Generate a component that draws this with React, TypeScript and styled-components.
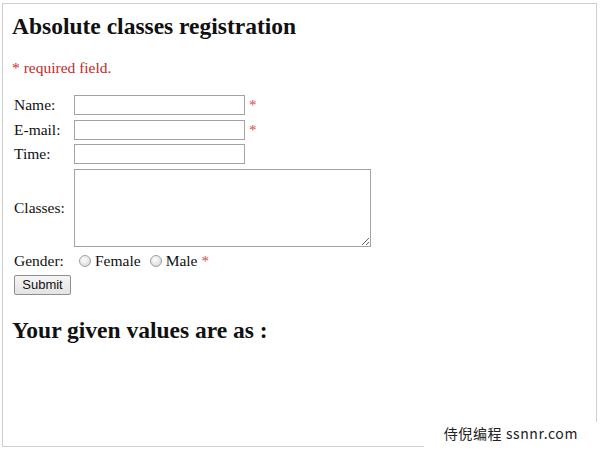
import React, { FC } from 'react';
import styled, { createGlobalStyle } from 'styled-components';

const GlobalStyle = createGlobalStyle`
    html, body {
        margin: 0;
        padding: 0;
        background: #ffffff;
    }
    body {
        width: 600px;
        height: 450px;
        overflow: hidden;
        font-family: 'Liberation Serif', 'Times New Roman', serif;
        color: #111111;
    }
`;

const Frame = styled.div`
    position: relative;
    box-sizing: border-box;
    margin: 3px 0 0 2px;
    width: 595px;
    height: 444px;
    border: 1px solid #cfcfcf;
    padding: 9px 9px 0 9px;
`;

const Title = styled.h2`
    margin: 0;
    font-size: 23.5px;
    line-height: 26px;
    font-weight: bold;
`;

const Required = styled.p`
    margin: 20px 0 0 0;
    font-size: 15.5px;
    line-height: 18px;
    color: #c62828;
`;

const FormGrid = styled.form`
    display: grid;
    grid-template-columns: 60px auto;
    row-gap: 4.5px;
    margin: 18px 0 0 2px;
    align-items: center;
    justify-items: start;
`;

const Label = styled.label`
    font-size: 15.5px;
    line-height: 18px;
`;

const Field = styled.div`
    display: flex;
    align-items: center;
    gap: 4px;
`;

const TextInput = styled.input`
    box-sizing: border-box;
    width: 171px;
    height: 20px;
    margin: 0;
    border: 1px solid #a3a3a3;
    background: #ffffff;
    outline: none;
`;

const TextArea = styled.textarea`
    box-sizing: border-box;
    display: block;
    width: 297px;
    height: 78px;
    margin: 0;
    border: 1px solid #a3a3a3;
    outline: none;
`;

const Star = styled.span`
    color: #d84a4a;
    font-size: 15px;
    line-height: 18px;
`;

const RadioGroup = styled.div`
    display: flex;
    align-items: center;
    font-size: 15.5px;
    line-height: 18px;
    padding: 1px 0 0 5px;
`;

const Radio = styled.input.attrs({ type: 'radio' })`
    appearance: none;
    box-sizing: border-box;
    width: 12px;
    height: 12px;
    margin: 0 4px 0 0;
    border-radius: 50%;
    border: 1px solid #a0a0a0;
    background: radial-gradient(circle at 40% 35%, #fbfbfb 0%, #e6e6e6 55%, #cfcfcf 100%);
`;

const RadioText = styled.span<{ $gap: number }>`
    margin-right: ${({ $gap }) => $gap}px;
`;

const SubmitButton = styled.button`
    grid-column: 1 / span 2;
    box-sizing: border-box;
    width: 57px;
    height: 20px;
    margin: 0;
    padding: 0;
    border: 1px solid #8f8f8f;
    border-radius: 2px;
    background: linear-gradient(#f6f6f6, #e3e3e3);
    font-family: 'Liberation Sans', Arial, sans-serif;
    font-size: 13px;
    color: #111111;
`;

const Subtitle = styled.h2`
    margin: 22px 0 0 0;
    font-size: 23.5px;
    line-height: 26px;
    font-weight: bold;
`;

const Watermark = styled.div`
    position: absolute;
    right: -4px;
    bottom: -5px;
    width: 176px;
    height: 29px;
    background: #ffffff;
    display: flex;
    align-items: flex-start;
    justify-content: flex-end;
    padding: 2px 22px 0 0;
    box-sizing: border-box;
    font-family: 'Noto Sans CJK SC', 'Noto Sans', sans-serif;
    font-size: 14px;
    line-height: 18px;
    letter-spacing: 0.6px;
    color: #222222;
`;

const App: FC = () => {
    return (
        <>
            <GlobalStyle />
            <Frame>
                <Title>Absolute classes registration</Title>
                <Required>* required field.</Required>
                <FormGrid onSubmit={(e) => e.preventDefault()}>
                    <Label htmlFor="name">Name:</Label>
                    <Field>
                        <TextInput id="name" type="text" />
                        <Star>*</Star>
                    </Field>
                    <Label htmlFor="email">E-mail:</Label>
                    <Field>
                        <TextInput id="email" type="text" />
                        <Star>*</Star>
                    </Field>
                    <Label htmlFor="time">Time:</Label>
                    <Field>
                        <TextInput id="time" type="text" />
                    </Field>
                    <Label htmlFor="classes">Classes:</Label>
                    <Field>
                        <TextArea id="classes" />
                    </Field>
                    <Label>Gender:</Label>
                    <RadioGroup>
                        <Radio name="gender" />
                        <RadioText $gap={9}>Female</RadioText>
                        <Radio name="gender" />
                        <RadioText $gap={4}>Male</RadioText>
                        <Star>*</Star>
                    </RadioGroup>
                    <SubmitButton type="submit">Submit</SubmitButton>
                </FormGrid>
                <Subtitle>Your given values are as :</Subtitle>
                <Watermark>侍倪编程 ssnnr.com</Watermark>
            </Frame>
        </>
    );
};

export default App;
